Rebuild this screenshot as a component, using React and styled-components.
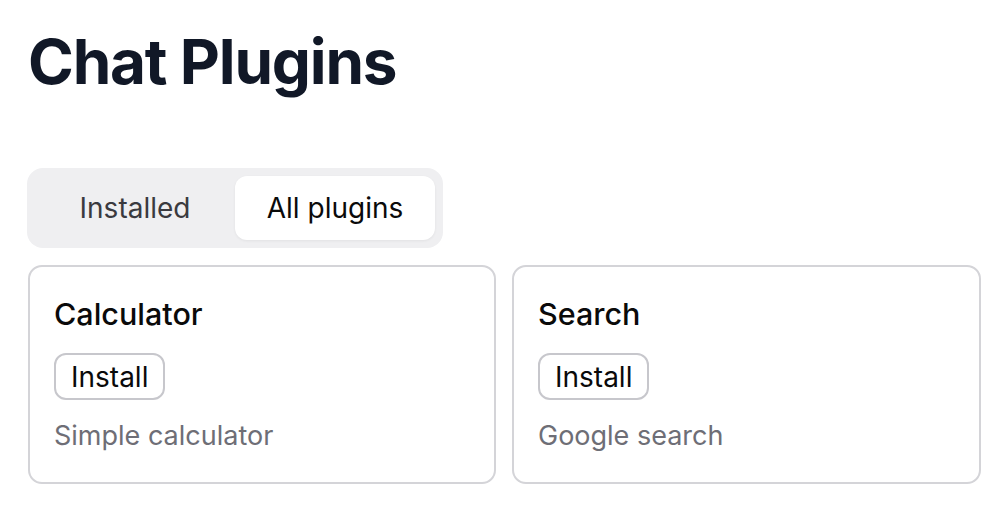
import React, { useState } from "react";
import styled, { createGlobalStyle } from "styled-components";

const Global = createGlobalStyle`
  html, body { margin: 0; padding: 0; background: #fff; }
  body { font-family: Inter, "Noto Sans", sans-serif; -webkit-font-smoothing: antialiased; }
`;

const Page = styled.div`
  padding: 31px 13px 20px 28px;
`;

const Title = styled.h1`
  margin: 0;
  font-size: 62px;
  line-height: 62px;
  font-weight: 700;
  color: #111827;
  letter-spacing: -1.2px;
`;

const Tabs = styled.div`
  margin-top: 75px;
  margin-left: -1px;
  display: inline-flex;
  padding: 8px;
  background: #efeff1;
  border-radius: 16px;
`;

const Tab = styled.button`
  width: 200px;
  height: 64px;
  border: none;
  border-radius: 12px;
  font-family: inherit;
  font-size: 28px;
  color: ${(p) => (p.$active ? "#0a0a0a" : "#3a3a3f")};
  background: ${(p) => (p.$active ? "#fff" : "transparent")};
  box-shadow: ${(p) => (p.$active ? "0 1px 3px rgba(0,0,0,0.06)" : "none")};
  cursor: pointer;
  padding: 0;
`;

const Grid = styled.div`
  margin-top: 17px;
  display: grid;
  grid-template-columns: 468px 469px;
  gap: 16px;
`;

const Card = styled.div`
  border: 2px solid #d4d4d8;
  border-radius: 14px;
  padding: 29px 24px 28px;
  height: 219px;
  box-sizing: border-box;
  display: flex;
  flex-direction: column;
  align-items: flex-start;
`;

const CardTitle = styled.div`
  font-size: 30.5px;
  line-height: 36px;
  font-weight: 500;
  color: #0a0a0a;
`;

const InstallButton = styled.button`
  margin-top: 21px;
  height: 47px;
  box-sizing: border-box;
  padding: 0 15px;
  border: 2px solid #c7c7cc;
  border-radius: 12px;
  background: #fff;
  font-family: inherit;
  font-size: 28px;
  color: #0a0a0a;
  cursor: pointer;
`;

const Desc = styled.div`
  margin-top: 19px;
  font-size: 27px;
  line-height: 34px;
  color: #6e6e76;
`;

const plugins = [
  { name: "Calculator", desc: "Simple calculator" },
  { name: "Search", desc: "Google search" },
];

export default function App() {
  const [tab, setTab] = useState("all");
  return (
    <Page>
      <Global />
      <Title>Chat Plugins</Title>
      <Tabs>
        <Tab $active={tab === "installed"} onClick={() => setTab("installed")}>Installed</Tab>
        <Tab $active={tab === "all"} onClick={() => setTab("all")}>All plugins</Tab>
      </Tabs>
      <Grid>
        {plugins.map((p) => (
          <Card key={p.name}>
            <CardTitle>{p.name}</CardTitle>
            <InstallButton>Install</InstallButton>
            <Desc>{p.desc}</Desc>
          </Card>
        ))}
      </Grid>
    </Page>
  );
}
